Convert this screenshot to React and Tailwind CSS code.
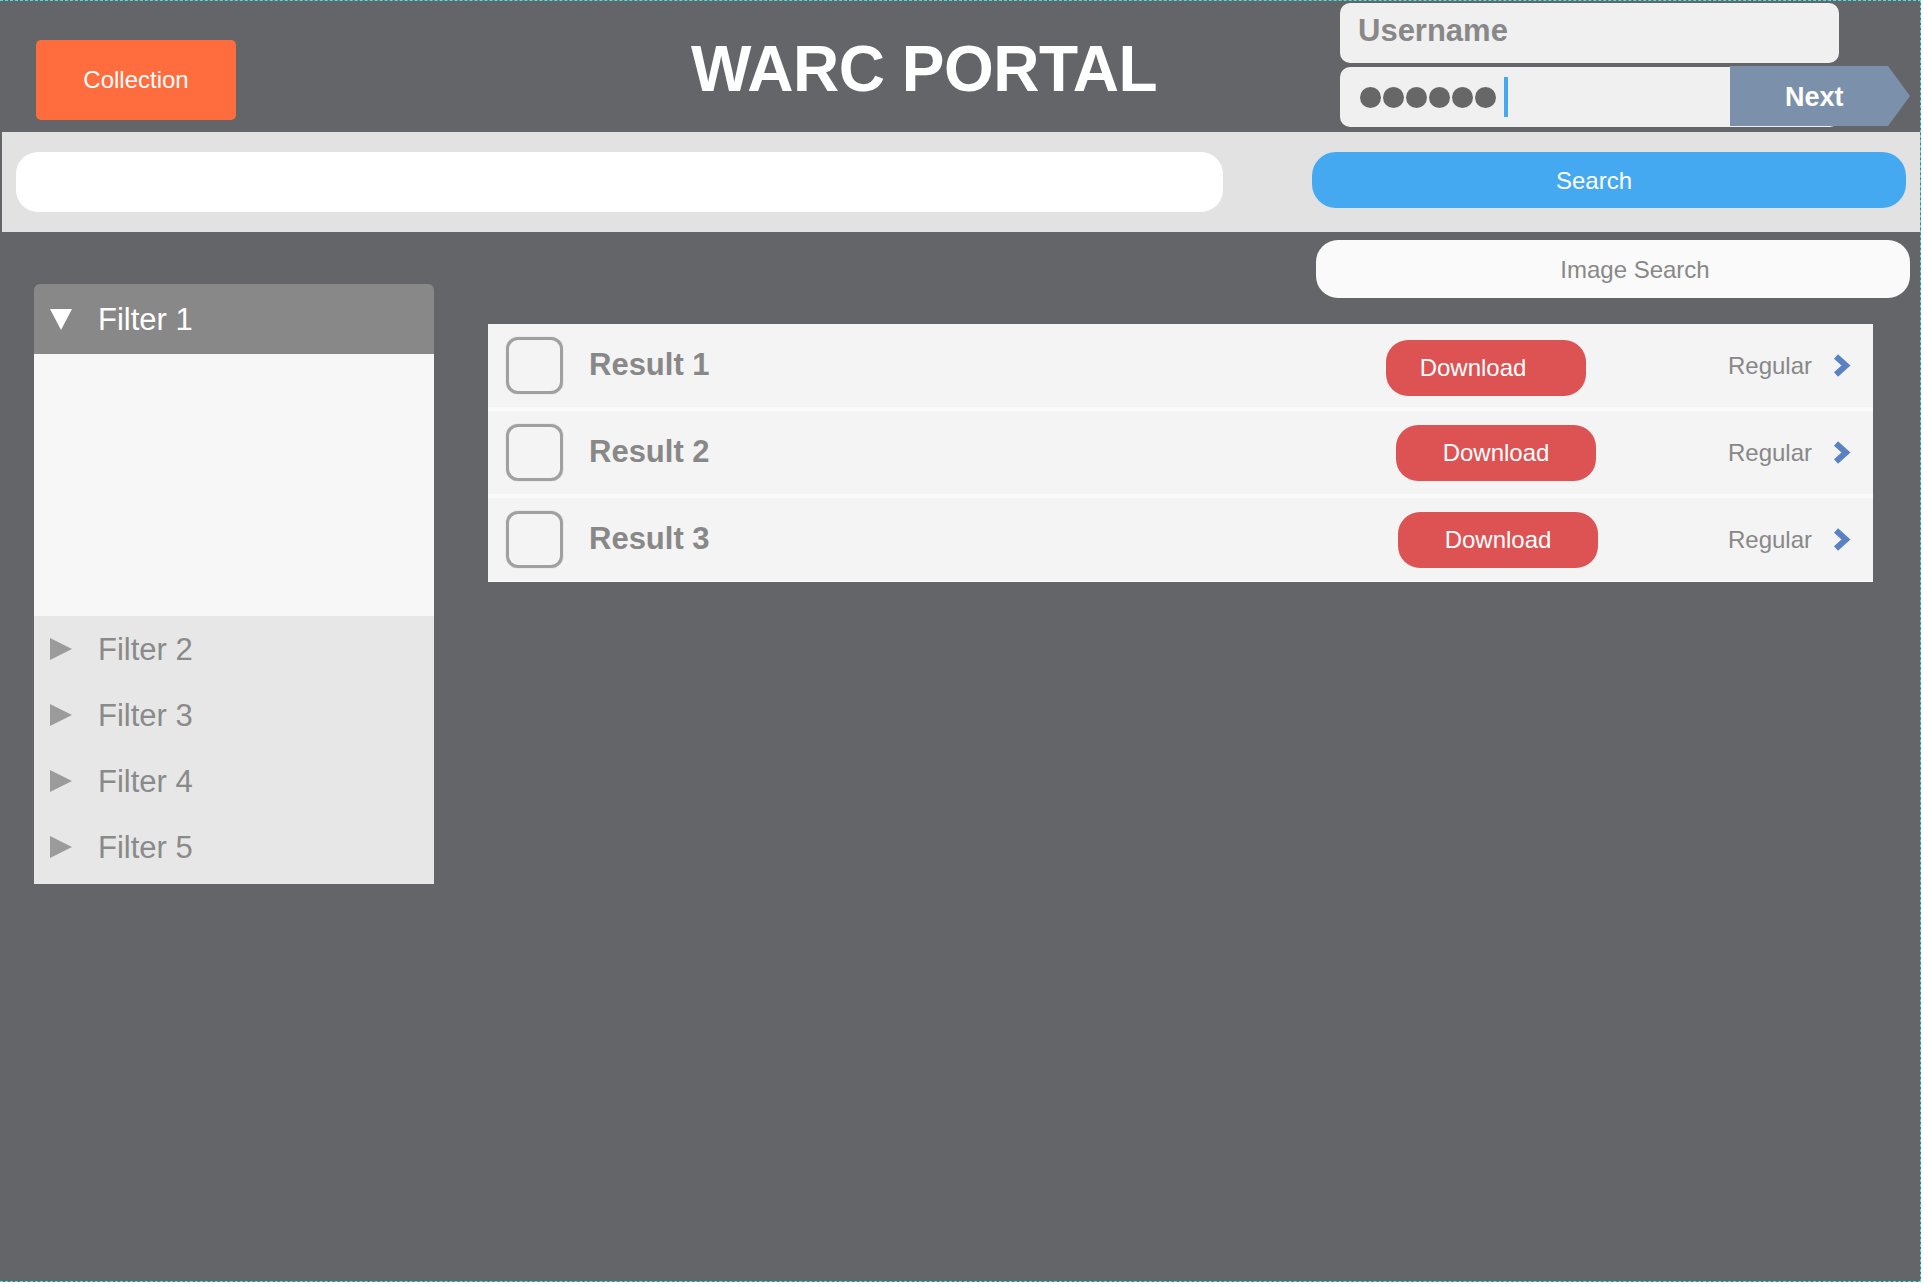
export default function App() {
  const results = [
    { name: "Result 1", dl: "ml-[0px] mt-[5px]", txt: "pr-[26px]" },
    { name: "Result 2", dl: "ml-[10px]", txt: "pr-[0px]" },
    { name: "Result 3", dl: "ml-[12px]", txt: "pr-[0px]" },
  ];
  const filters = ["Filter 2", "Filter 3", "Filter 4", "Filter 5"];
  return (
    <div className="w-[1924px] h-[1284px] bg-white font-['Liberation_Sans',Arial,sans-serif]">
      <div className="w-[1921px] h-[1282px] bg-[#646568] border-t border-r border-b border-dashed border-[#3fe3e8] flex flex-col">
        {/* Header */}
        <div className="h-[131px] flex items-start pl-[36px] shrink-0">
          <div className="mt-[39px] w-[200px] h-[80px] rounded-[5px] bg-[#ff6c3d] text-white text-[24px] flex items-center justify-center">
            Collection
          </div>
          <div className="ml-[453px] w-[470px] mt-[36px] text-center text-[64px] font-bold leading-none text-white tracking-[-0.5px] whitespace-nowrap">
            WARC PORTAL
          </div>
          <div className="ml-[181px] mt-[2px] w-[500px] flex flex-col gap-[4px]">
            <div className="h-[60px] w-[499px] rounded-[10px] bg-[#f0f0f0] flex items-center pl-[18px] pb-[4px] text-[31px] font-bold text-[#888888]">
              Username
            </div>
            <div className="relative h-[60px] w-[500px] rounded-[10px] bg-[#f0f0f0] flex items-center pl-[20px]">
              <div className="flex gap-[2px]">
                {[0, 1, 2, 3, 4, 5].map((i) => (
                  <span key={i} className="block w-[21px] h-[21px] rounded-full bg-[#676767]" />
                ))}
              </div>
              <div className="ml-[8px] w-[4px] h-[40px] bg-[#44a9f0]" />
              <div className="absolute left-[390px] top-[-1px] w-[180px] h-[60px] bg-[#7b91ab] [clip-path:polygon(0_0,158px_0,100%_50%,158px_100%,0_100%)] flex items-center pl-[55px] pt-[2px] text-white text-[27px] font-bold">
                Next
              </div>
            </div>
          </div>
        </div>

        {/* Search band */}
        <div className="ml-[2px] h-[100px] bg-[#e2e2e2] flex items-start pt-[20px] pl-[14px] shrink-0">
          <div className="w-[1207px] h-[60px] bg-white rounded-[22px]" />
          <div className="ml-[89px] w-[594px] h-[56px] rounded-[24px] bg-[#45a9f1] text-white text-[24px] flex items-center justify-center pr-[30px] pt-[1px]">
            Search
          </div>
        </div>

        {/* Main */}
        <div className="flex items-start">
          {/* Filters */}
          <div className="ml-[34px] mt-[52px] w-[400px] flex flex-col">
            <div className="h-[70px] rounded-t-[6px] bg-[#888888] flex items-center">
              <svg className="ml-[16px]" width="22" height="21" viewBox="0 0 22 21">
                <polygon points="0,0 22,0 11,21" fill="#ffffff" />
              </svg>
              <span className="ml-[26px] text-[31px] text-white leading-none">Filter 1</span>
            </div>
            <div className="h-[262px] bg-[#f7f7f7]" />
            <div className="bg-[#e7e7e7] pb-[4px] flex flex-col">
              {filters.map((f) => (
                <div key={f} className="h-[66px] flex items-center">
                  <svg className="ml-[16px]" width="22" height="22" viewBox="0 0 22 22">
                    <polygon points="0,0 22,11 0,22" fill="#9b9b9b" />
                  </svg>
                  <span className="ml-[26px] text-[31px] text-[#8a8a8a] leading-none">{f}</span>
                </div>
              ))}
            </div>
          </div>

          {/* Right column */}
          <div className="ml-[54px] mt-[8px] w-[1422px] flex flex-col">
            <div className="self-end w-[594px] h-[58px] bg-[#fafafa] rounded-[22px] flex items-center justify-center pl-[44px] pt-[2px] text-[24px] text-[#888888]">
              Image Search
            </div>
            <div className="mt-[26px] w-[1385px] bg-[#f4f4f4] flex flex-col">
              {results.map((r, idx) => (
                <div
                  key={r.name}
                  className={
                    idx < 2
                      ? "h-[87px] border-b-4 border-[#fbfbfb] flex items-center pl-[18px] pr-[22px]"
                      : "h-[84px] border-b border-[#fbfbfb] flex items-center pl-[18px] pr-[22px]"
                  }
                >
                  <div className="w-[880px] flex items-center shrink-0">
                    <div className="w-[57px] h-[57px] rounded-[12px] border-[3px] border-[#a0a0a0] shadow-[0_0_1px_#999]" />
                    <span className="ml-[26px] text-[31px] font-bold text-[#888888]">{r.name}</span>
                  </div>
                  <div
                    className={
                      "w-[200px] h-[56px] rounded-[22px] bg-[#dd5353] text-white text-[24px] flex items-center justify-center " +
                      r.dl +
                      " " +
                      r.txt
                    }
                  >
                    Download
                  </div>
                  <div className="flex-1" />
                  <span className="text-[24px] text-[#888888]">Regular</span>
                  <svg className="ml-[19px]" width="20" height="25" viewBox="0 0 20 25">
                    <polyline points="5,3.5 15,12.5 5,21.5" fill="none" stroke="#5a82c3" strokeWidth="6" strokeLinejoin="miter" />
                  </svg>
                </div>
              ))}
            </div>
          </div>
        </div>
      </div>
    </div>
  );
}
